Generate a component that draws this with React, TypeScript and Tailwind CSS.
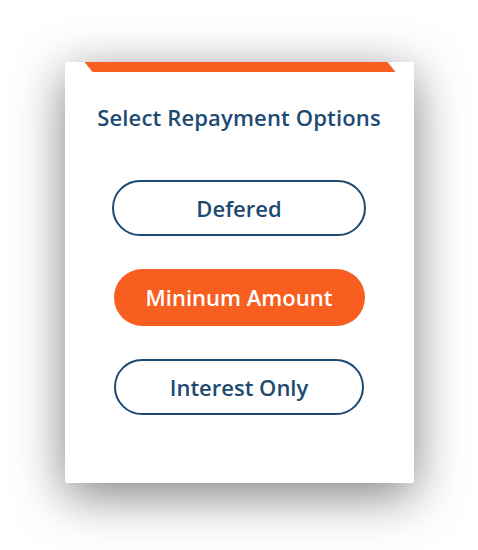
import React from 'react';

const options = [
  { label: 'Defered', width: 'w-[254px]' },
  { label: 'Mininum Amount', width: 'w-[251px]' },
  { label: 'Interest Only', width: 'w-[250px]' },
];

const App: React.FC = () => {
  const [selected, setSelected] = React.useState('Mininum Amount');

  return (
    <div className="min-h-[550px] w-full bg-white flex justify-center pt-[62px] font-['Open_Sans',sans-serif]">
      <div className="w-[349px] h-[421px] bg-white rounded-[2px] shadow-[0_12px_50px_rgba(0,0,0,0.5)] flex flex-col items-center">
        {/* Accent band */}
        <div className="self-start ml-[20px] w-[311px] h-[10px] bg-[#f75e20] [clip-path:polygon(0_0,303px_0,100%_100%,8px_100%)]" />

        <h2 className="mt-[30px] text-[22px] leading-[30px] tracking-[0.15px] font-semibold text-[#1d4a72]">
          Select Repayment Options
        </h2>

        <div className="mt-[48px] flex flex-col items-center gap-[33px]">
          {options.map(opt => {
            const isActive = selected === opt.label;
            return (
              <button
                key={opt.label}
                onClick={() => setSelected(opt.label)}
                className={
                  isActive
                    ? `${opt.width} h-[57px] rounded-full bg-[#f75e20] text-white text-[22px] font-semibold`
                    : `${opt.width} h-[56px] rounded-full border-2 border-[#1d4a72] bg-white text-[#1d4a72] text-[22px] font-semibold`
                }
              >
                {opt.label}
              </button>
            );
          })}
        </div>
      </div>
    </div>
  );
};

export default App;
